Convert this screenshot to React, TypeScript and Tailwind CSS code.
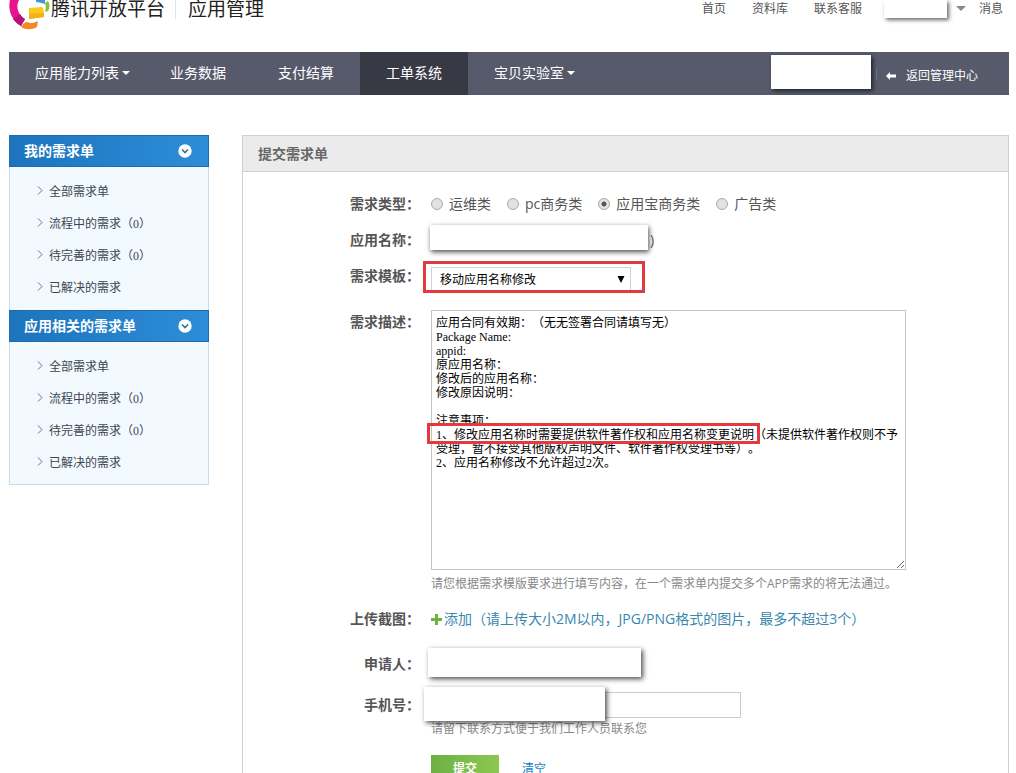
import React from 'react';

type NavItem = { label: string; caret?: boolean; active?: boolean };

const NAV_ITEMS: NavItem[] = [
  { label: '应用能力列表', caret: true },
  { label: '业务数据' },
  { label: '支付结算' },
  { label: '工单系统', active: true },
  { label: '宝贝实验室', caret: true },
];

const SIDE_GROUPS = [
  { title: '我的需求单', items: ['全部需求单', '流程中的需求（0）', '待完善的需求（0）', '已解决的需求'] },
  { title: '应用相关的需求单', items: ['全部需求单', '流程中的需求（0）', '待完善的需求（0）', '已解决的需求'] },
];

const DEMAND_TYPES = ['运维类', 'pc商务类', '应用宝商务类', '广告类'];

const TEMPLATE_TEXT = `应用合同有效期：（无无签署合同请填写无）
Package Name:
appid:
原应用名称：
修改后的应用名称：
修改原因说明：

注意事项：
1、修改应用名称时需要提供软件著作权和应用名称变更说明（未提供软件著作权则不予受理，暂不接受其他版权声明文件、软件著作权受理书等）。
2、应用名称修改不允许超过2次。`;

const Logo = () => (
  <svg width="42" height="30" viewBox="0 0 42 30" className="shrink-0" aria-hidden="true">
    <path d="M1 0 C-1 8 1 19 12 26 L16 19 C10 15 6 8 10 0 Z" fill="#e8148c" />
    <path d="M4 19 C6 22 9 24 12 26 L16 19 C14 18 12 16 11 14 Z" fill="#b5127a" />
    <path d="M12 27 C14 24 16 22 18 22 C22 24 25 23 29 21 L28 27 C23 30 17 30 12 27 Z" fill="#f08a24" />
    <path d="M20 8 L33 7 C35 9 35 13 35 17 L20 19 Z" fill="#fbc81e" />
    <path d="M20 14 L35 13 V17 L20 19 Z" fill="#f6b015" />
    <path d="M27 0 H36 L36 4 C33 3 30 2 27 2 Z" fill="#3a97dc" />
    <path d="M36 3 L39 1 C41 4 41 8 39 11 L36 12 C37 9 37 6 36 3 Z" fill="#86c33a" />
  </svg>
);

const Caret = ({ className = '' }: { className?: string }) => (
  <svg viewBox="0 0 8 4" className={`h-1 w-2 ${className}`} aria-hidden="true">
    <path d="M0 0H8L4 4Z" fill="currentColor" />
  </svg>
);

const Row = ({ label, htmlFor, className = '', children }: { label: string; htmlFor?: string; className?: string; children: React.ReactNode }) => (
  <div className={`flex gap-[11px] ${className}`}>
    <label htmlFor={htmlFor} className="w-[177px] shrink-0 text-right font-bold text-[#555]">
      {label}：
    </label>
    <div className="relative min-w-0 flex-1">{children}</div>
  </div>
);

const Header = () => (
  <header className="flex h-[52px] items-start justify-between">
    <div className="flex items-start text-[19px] leading-[18px] text-[#222]">
      <Logo />
      <span>腾讯开放平台</span>
      <span className="mr-3 ml-[10px] h-[19px] w-px bg-[#e4e4e4]" />
      <h1>应用管理</h1>
    </div>
    <nav className="flex items-start pr-1.5 text-xs leading-[18px] text-[#555]">
      <a href="#home">首页</a>
      <a href="#docs" className="ml-[26px]">资料库</a>
      <a href="#service" className="ml-[26px]">联系客服</a>
      <span className="ml-[22px] h-[18px] w-[63px] bg-white shadow-[2px_2px_4px_rgba(0,0,0,0.6)]" />
      <svg width="10" height="5" viewBox="0 0 10 5" className="mt-1.5 ml-[9px] text-[#888]" aria-hidden="true">
        <path d="M0 0H10L5 5Z" fill="currentColor" />
      </svg>
      <a href="#messages" className="ml-[13px]">消息</a>
    </nav>
  </header>
);

const NavBar = () => (
  <nav className="flex h-[43px] items-stretch justify-between bg-[#565a6a] text-sm text-white">
    <ul className="flex">
      {NAV_ITEMS.map((item) => (
        <li key={item.label} className="flex">
          <a
            href="#nav"
            className={`flex items-center whitespace-nowrap pb-0.5 pl-[26px] ${item.caret ? 'pr-[14px]' : 'pr-[26px]'} ${item.active ? 'bg-[#373a45]' : ''}`}
          >
            {item.label}
            {item.caret && <Caret className="ml-[3px]" />}
          </a>
        </li>
      ))}
    </ul>
    <div className="flex items-center pr-[31px] text-xs">
      <span className="mb-[3px] h-[34px] w-[100px] bg-white shadow-[2px_2px_4px_rgba(0,0,0,0.6)]" />
      <span className="ml-[5px] h-3 w-px bg-[#6b7080]" />
      <a href="#center" className="flex items-center gap-[10px] pt-1 pl-[9px]">
        <svg width="10" height="8" viewBox="0 0 10 8" aria-hidden="true">
          <path d="M0 4L4 0V2.5H10V5.5H4V8Z" fill="currentColor" />
        </svg>
        返回管理中心
      </a>
    </div>
  </nav>
);

const SideBar = () => (
  <aside className="w-[200px] shrink-0">
    {SIDE_GROUPS.map((group, index) => (
      <section key={group.title}>
        <h2>
          <button
            type="button"
            className="flex h-8 w-full items-center justify-between border border-[#1f6aa8] bg-linear-to-r from-[#1c74bd] to-[#2e8dd8] pr-4 pl-[14px] text-sm font-bold text-white"
          >
            {group.title}
            <svg width="14" height="14" viewBox="0 0 14 14" aria-hidden="true">
              <circle cx="7" cy="7" r="6.7" fill="#fff" />
              <path d="M4 5.5L7 8.5L10 5.5" fill="none" stroke="#27739f" strokeWidth="1.6" />
            </svg>
          </button>
        </h2>
        <ul className={`border-x border-[#c9dcea] bg-[#f2f9ff] pt-2 ${index === SIDE_GROUPS.length - 1 ? 'border-b pb-1.5' : 'pb-[7px]'}`}>
          {group.items.map((item) => (
            <li key={item}>
              <a href="#list" className="flex h-8 items-center gap-1.5 pt-px pl-[27px] font-[Liberation_Serif,Noto_Sans_CJK_SC,serif] text-xs text-[#3c4650] [text-spacing-trim:space-all]">
                <svg width="6" height="9" viewBox="0 0 6 9" className="mb-[3px]" aria-hidden="true">
                  <path d="M1 0.5L5 4.5L1 8.5" fill="none" stroke="#68727c" />
                </svg>
                {item}
              </a>
            </li>
          ))}
        </ul>
      </section>
    ))}
  </aside>
);

const DemandForm = () => {
  const [type, setType] = React.useState('应用宝商务类');
  const [description, setDescription] = React.useState(TEMPLATE_TEXT);

  return (
    <form className="pt-[14px] pb-6 text-sm" onSubmit={(e) => e.preventDefault()}>
      <Row label="需求类型" className="leading-9">
        <div className="flex h-9 items-center gap-4">
          {DEMAND_TYPES.map((name) => (
            <label key={name} className="flex items-center gap-1.5 whitespace-nowrap text-[#555]">
              <input
                type="radio"
                name="demandType"
                checked={type === name}
                onChange={() => setType(name)}
                className="size-3 appearance-none rounded-full border border-[#aaa] bg-[#e2e2e2] checked:bg-[radial-gradient(circle,#555_0_2px,#e6e6e6_3px)]"
              />
              {name}
            </label>
          ))}
        </div>
      </Row>

      <Row label="应用名称" className="leading-9">
        <div className="pl-[219px] text-[#555]">)</div>
        <span className="absolute top-[3px] -left-px h-[25px] w-[218px] bg-white shadow-[1px_2px_5px_rgba(0,0,0,0.7)]" />
      </Row>

      <Row label="需求模板" htmlFor="template" className="leading-9">
        <div className="flex h-9 items-end pb-0.5">
          <div className="relative flex">
            <select
              id="template"
              className="h-[25px] w-[200px] appearance-none border border-[#ccd3dc] bg-white pl-2 text-xs leading-[23px] text-black"
            >
              <option>移动应用名称修改</option>
            </select>
            <svg width="8" height="7" viewBox="0 0 8 7" className="pointer-events-none absolute top-[9px] right-1.5" aria-hidden="true">
              <path d="M0.5 0H7.5L4 7Z" fill="#000" />
            </svg>
          </div>
        </div>
        <span className="pointer-events-none absolute top-[3px] -left-2 h-8 w-[222px] border-3 border-[#e23b3f]" />
      </Row>

      <Row label="需求描述" htmlFor="description" className="mt-4 leading-6">
        <textarea
          id="description"
          value={description}
          onChange={(e) => setDescription(e.target.value)}
          className="block h-[260px] w-[475px] resize overflow-hidden border border-[#c4c4c4] bg-white px-1 pt-[5px] pb-1 font-[Liberation_Serif,Noto_Sans_CJK_SC,serif] text-xs leading-[14px] text-black [text-spacing-trim:space-all]"
        />
        <span className="pointer-events-none absolute top-[113px] -left-1 h-[21px] w-[333px] border-3 border-[#e23b3f]" />
        <p className="mt-1 text-xs leading-5 text-[#888]">
          请您根据需求模版要求进行填写内容，在一个需求单内提交多个APP需求的将无法通过。
        </p>
      </Row>

      <Row label="上传截图" className="mt-[10px] leading-[30px]">
        <button type="button" className="flex items-center gap-0.5 whitespace-nowrap text-[#3a87ad] [text-spacing-trim:space-all]">
          <svg width="11" height="11" viewBox="0 0 11 11" aria-hidden="true">
            <path d="M4 0H7V4H11V7H7V11H4V7H0V4H4Z" fill="#6cb33e" />
          </svg>
          添加（请上传大小2M以内，JPG/PNG格式的图片，最多不超过3个）
        </button>
      </Row>

      <Row label="申请人" className="mt-3 leading-9">
        <span className="absolute top-0.5 -left-[3px] h-[29px] w-[213px] bg-white shadow-[2px_2px_5px_rgba(0,0,0,0.7)]" />
      </Row>

      <Row label="手机号" htmlFor="phone" className="mt-[10px] leading-[26px]">
        <input id="phone" type="tel" className="block h-[26px] w-[310px] border border-[#ccc] bg-white px-2" />
        <p className="text-xs leading-[22px] text-[#888]">请留下联系方式便于我们工作人员联系您</p>
        <span className="absolute -top-[5px] -left-[7px] h-[34px] w-[181px] bg-white shadow-[2px_2px_5px_rgba(0,0,0,0.7)]" />
      </Row>

      <div className="mt-[15px] flex h-7 items-center gap-[23px] pl-[188px]">
        <button type="submit" className="h-7 w-[68px] bg-linear-to-r from-[#6cb142] to-[#8cc850] text-xs font-bold text-white">
          提交
        </button>
        <button type="reset" className="text-xs text-[#1a82c4]">
          清空
        </button>
      </div>
    </form>
  );
};

export default function App() {
  return (
    <div className="min-h-screen bg-white pr-[7px] pl-[9px] font-[Open_Sans,Noto_Sans_CJK_SC,sans-serif]">
      <Header />
      <NavBar />
      <div className="mt-10 flex items-start gap-[33px]">
        <SideBar />
        <main className="min-w-0 flex-1 border border-[#d0d0d0]">
          <h2 className="h-9 border-b border-[#d0d0d0] bg-[#ebebeb] px-[15px] text-sm leading-9 font-bold text-[#666]">提交需求单</h2>
          <DemandForm />
        </main>
      </div>
    </div>
  );
}
